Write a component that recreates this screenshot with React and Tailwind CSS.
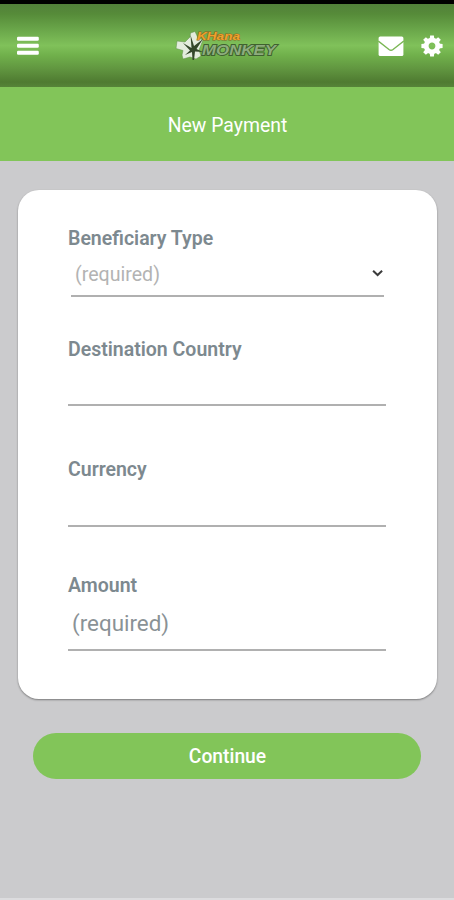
import React, { useState } from "react";

// Form ke saare fields
const fields = [
  {
    label: "Beneficiary Type",
    value: "(required)",
    select: true,
    wrap: "",
    row: "ml-[3px] mr-[3px] h-[47px] pl-1 pt-[5px] text-[19.6px] text-[#b3b3b3]",
  },
  { label: "Destination Country", wrap: "mt-10", row: "mr-px h-[45px]" },
  { label: "Currency", wrap: "mt-[51px]", row: "mr-px h-[46px]" },
  {
    label: "Amount",
    value: "(required)",
    wrap: "mt-[46px]",
    row: "mr-px h-[54px] pl-1 pt-0.5 text-[22.4px] text-[#8a9296]",
  },
];

const teeth = [0, 45, 90, 135, 180, 225, 270, 315];

function MenuIcon() {
  return (
    <svg className="h-[20px] w-[23px]" viewBox="0 0 23 20" fill="#fff">
      <rect x="0" y="0.7" width="21.8" height="4" rx="1.2" />
      <rect x="0" y="7.7" width="21.8" height="4" rx="1.2" />
      <rect x="0" y="14.7" width="21.8" height="4" rx="1.2" />
    </svg>
  );
}

function MailIcon() {
  return (
    <svg className="h-5 w-[26px]" viewBox="0 0 26 20">
      <rect x="0.6" y="0.4" width="24.8" height="19.6" rx="1.6" fill="#fff" />
      <path
        d="M0.3 5 L11 13.5 Q13 15 15 13.5 L25.8 5"
        fill="none"
        stroke="#79b653"
        strokeWidth="1.4"
      />
    </svg>
  );
}

function GearIcon() {
  return (
    <svg className="h-[22px] w-[22px]" viewBox="-11 -11 22 22" fill="#fff">
      {teeth.map((angle) => (
        <path
          key={angle}
          d="M-2.4 -6.5 L-1.9 -10.6 H1.9 L2.4 -6.5 Z"
          transform={`rotate(${angle})`}
        />
      ))}
      <circle r="5.8" fill="none" stroke="#fff" strokeWidth="4.8" />
    </svg>
  );
}

function Logo() {
  return (
    <svg
      className="h-8 w-[106px]"
      viewBox="0 0 106 32"
      fontFamily="'Liberation Sans', Arial, sans-serif"
      fontWeight="bold"
      fontStyle="italic"
    >
      {/* patti wala nishaan */}
      <path
        d="M3 11 L11 12 L16 7 L16.5 3 L21 1.5 L24 8 L29 10 L27 15 L25 20 L27 26 L22 29 L16 27 L9 29 L8 25 L9 20.5 L2 18.5 Z"
        fill="#e3ecdd"
        stroke="#5f8f48"
        strokeWidth="0.5"
      />
      <path
        d="M18.5 30 L18 22 L11 25 L16 20.5 L9 13 L17.5 18 L16.5 5 L20 16 L29 9 L22.5 19 L29 22 L21 21.5 L20 30 Z"
        fill="#34482b"
      />
      <text
        x="23"
        y="10"
        fontSize="11"
        textLength="43"
        lengthAdjust="spacingAndGlyphs"
        fill="#f0a12a"
        stroke="#8a6420"
        strokeWidth="0.9"
        paintOrder="stroke"
      >
        KHana
      </text>
      <text
        x="28"
        y="24.7"
        fontSize="14.5"
        textLength="74"
        lengthAdjust="spacingAndGlyphs"
        fill="#8dac7e"
        stroke="#3f612f"
        strokeWidth="1.8"
        paintOrder="stroke"
      >
        MONKEY
      </text>
    </svg>
  );
}

function Header() {
  return (
    <header className="grid h-[87px] grid-cols-[1fr_106px_1fr] items-center border-t-4 border-black bg-[linear-gradient(to_bottom,#52803a_0%,#568b39_12%,#69a549_30%,#80c15a_50%,#70b04b_62%,#619640_78%,#4f7b31_94%,#568438_100%)] px-[11px]">
      <button aria-label="Menu" className="ml-[6px] justify-self-start">
        <MenuIcon />
      </button>
      <Logo />
      <div className="flex items-center justify-end gap-[17px]">
        <button aria-label="Messages">
          <MailIcon />
        </button>
        <button aria-label="Settings">
          <GearIcon />
        </button>
      </div>
    </header>
  );
}

function Field({ field, active, onSelect }) {
  return (
    <div className={field.wrap} onClick={onSelect}>
      <div className="pt-0.5 text-[19.5px] font-semibold leading-[22px] text-[#7d898f]">
        {field.label}
      </div>
      <div
        className={`flex items-center justify-between border-b-2 border-[#b0b0b0] ${field.row}`}
      >
        <span>{field.value}</span>
        {field.select && (
          <svg
            className={`mb-[5px] h-2 w-3 ${active ? "rotate-180" : ""}`}
            viewBox="0 0 12 8"
            fill="none"
            stroke="#3c3c3c"
            strokeWidth="2"
          >
            <path d="M1.1 1.7 L5.6 6 L10.1 1.7" />
          </svg>
        )}
      </div>
    </div>
  );
}

function App() {
  const [open, setOpen] = useState(false);

  return (
    <div className="flex h-[900px] w-[454px] flex-col overflow-hidden border-b-2 border-[#dcdcde] bg-[#cbcbcd] font-[Roboto,sans-serif]">
      <Header />

      {/* Page ka title */}
      <div className="flex h-[74px] items-center justify-center bg-[#82c559] pl-px pt-[3px] text-[19.4px] text-white">
        New Payment
      </div>

      <main className="px-[18px] pt-[29px]">
        <section className="mr-[-1px] h-[509px] rounded-[21px] bg-white px-[50px] pt-9 shadow-[0_1px_2px_rgba(0,0,0,0.4)]">
          {fields.map((field) => (
            <Field
              key={field.label}
              field={field}
              active={open}
              onSelect={() => field.select && setOpen(!open)}
            />
          ))}
        </section>

        <button className="ml-[15px] mt-[34px] block h-[46px] w-[388px] rounded-full bg-[#82c559] pl-px pt-[3px] text-[19.3px] font-medium text-white">
          Continue
        </button>
      </main>
    </div>
  );
}

export default App;
